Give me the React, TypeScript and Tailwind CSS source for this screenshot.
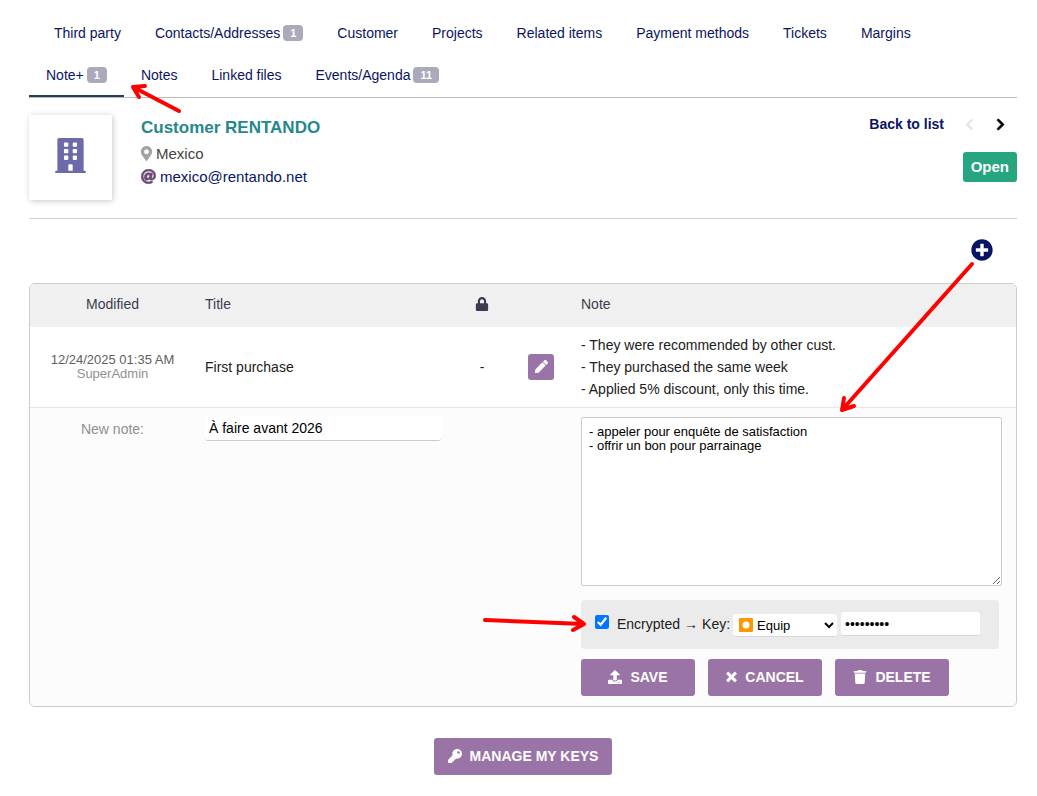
import { useState } from "react";
import type { ReactNode } from "react";
import {
  FaAt,
  FaBuilding,
  FaChevronLeft,
  FaChevronRight,
  FaKey,
  FaLock,
  FaMapMarkerAlt,
  FaPen,
  FaPlusCircle,
  FaTimes,
  FaTrash,
  FaUpload,
} from "react-icons/fa";

type Tab = { label: string; count?: number; active?: boolean };

const topTabs: Tab[] = [
  { label: "Third party" },
  { label: "Contacts/Addresses", count: 1 },
  { label: "Customer" },
  { label: "Projects" },
  { label: "Related items" },
  { label: "Payment methods" },
  { label: "Tickets" },
  { label: "Margins" },
];

const bottomTabs: Tab[] = [
  { label: "Note+", count: 1, active: true },
  { label: "Notes" },
  { label: "Linked files" },
  { label: "Events/Agenda", count: 11 },
];

function TabLink({ label, count, active }: Tab) {
  return (
    <a
      href="#"
      className={`flex h-[42px] items-center gap-[3px] border-b-2 px-[17px] whitespace-nowrap text-[#0a1464] ${
        active ? "border-[#263c5c]" : "border-transparent"
      }`}
    >
      {label}
      {count !== undefined && (
        <span className="h-4 rounded bg-[#aaaabb] px-[7px] text-[11px] leading-4 font-bold text-white">
          {count}
        </span>
      )}
    </a>
  );
}

function ActionButton({ icon, children }: { icon: ReactNode; children: ReactNode }) {
  return (
    <button
      type="button"
      className="flex h-[37px] w-[114px] items-center justify-center gap-2 rounded-[3px] bg-[#9b74a7] font-bold text-white uppercase"
    >
      {icon}
      {children}
    </button>
  );
}

function Arrows() {
  return (
    <svg
      className="pointer-events-none absolute top-0 left-0 h-[796px] w-[1037px]"
      viewBox="0 0 1037 796"
      fill="none"
      stroke="#ff0000"
      strokeWidth="4"
      strokeLinecap="round"
      strokeLinejoin="round"
      aria-hidden="true"
    >
      <path d="M179 111 L133 87 M145 86 L133 87 L139 97" />
      <path d="M972 264 L842 410 M844 398 L842 410 L854 406" />
      <path d="M485 620 L584 624 M574 617 L584 624 L573 630" />
    </svg>
  );
}

export default function App() {
  const [title, setTitle] = useState("À faire avant 2026");
  const [note, setNote] = useState(
    "- appeler pour enquête de satisfaction\n- offrir un bon pour parrainage"
  );
  const [encrypted, setEncrypted] = useState(true);
  const [secret, setSecret] = useState("rentando1");

  return (
    <div className="relative bg-white pt-[13px] pr-5 pb-5 pl-[29px] font-['Liberation_Sans',Arial,sans-serif] text-sm text-[#202020]">
      <nav className="border-b border-[#bbbbbb]">
        <div className="flex pl-2">
          {topTabs.map((tab) => (
            <TabLink key={tab.label} {...tab} />
          ))}
        </div>
        <div className="flex">
          {bottomTabs.map((tab) => (
            <TabLink key={tab.label} {...tab} />
          ))}
        </div>
      </nav>

      <header className="flex items-start border-b border-[#d0d0d0] pt-[17px] pb-[18px]">
        <div className="flex h-[85px] w-[83px] items-center justify-center bg-white pb-1 shadow-[1px_1px_6px_#c8c8c8]">
          <FaBuilding size={35} color="#6c6aa8" />
        </div>
        <div className="ml-[29px] text-[15px]">
          <h1 className="mt-0.5 text-[17px] leading-[22px] font-bold text-[#25888c]">
            Customer RENTANDO
          </h1>
          <div className="mt-[3px] flex h-[23px] items-center gap-1 text-[#444444]">
            <FaMapMarkerAlt size={15} color="#a3a3a3" className="-mx-[2px] w-[15px]" />
            Mexico
          </div>
          <div className="flex h-[23px] items-center gap-1">
            <FaAt size={15} color="#6c4a75" stroke="#6c4a75" strokeWidth={20} />
            <a href="mailto:mexico@rentando.net" className="text-[#0a1464]">
              mexico@rentando.net
            </a>
          </div>
        </div>
        <div className="ml-auto flex flex-col items-end">
          <div className="flex h-[18px] items-center pr-[10px]">
            <a href="#" className="font-bold text-[#0a1464]">
              Back to list
            </a>
            <button type="button" aria-label="Previous" disabled className="ml-[19px]">
              <FaChevronLeft size={13} color="#e3e3e3" />
            </button>
            <button type="button" aria-label="Next" className="ml-[18px]">
              <FaChevronRight size={13} color="#000000" stroke="#000000" strokeWidth={30} />
            </button>
          </div>
          <span className="mt-[19px] h-[30px] rounded-[3px] bg-[#25a580] px-2 text-[15px] leading-[30px] font-bold text-white">
            Open
          </span>
        </div>
      </header>

      <div className="flex justify-end pt-5 pr-6 pb-[22px]">
        <button type="button" aria-label="New note">
          <FaPlusCircle size={22} color="#0a1464" />
        </button>
      </div>

      <div className="overflow-hidden rounded-md border border-[#cccccc]">
        <table className="w-full table-fixed">
          <colgroup>
            <col className="w-[165px]" />
            <col className="w-64" />
            <col className="w-[62px]" />
            <col className="w-[58px]" />
            <col />
          </colgroup>
          <thead className="bg-[#f0f0f0] text-[#3c3c50]">
            <tr className="h-[43px]">
              <th className="pb-[3px] font-normal">Modified</th>
              <th className="px-[10px] pb-[3px] text-left font-normal">Title</th>
              <th className="pb-[3px]">
                <FaLock size={14} className="mx-auto" aria-label="Encrypted" />
              </th>
              <th />
              <th className="px-[10px] pb-[3px] text-left font-normal">Note</th>
            </tr>
          </thead>
          <tbody>
            <tr className="h-20">
              <td className="text-center text-[13px] leading-[14px] text-[#606060]">
                12/24/2025 01:35 AM
                <div className="text-[#909090]">SuperAdmin</div>
              </td>
              <td className="px-[10px]">First purchase</td>
              <td className="text-center">-</td>
              <td className="pl-[15px]">
                <button
                  type="button"
                  aria-label="Edit note"
                  className="flex size-[26px] items-center justify-center rounded-[3px] bg-[#9b74a7] text-white"
                >
                  <FaPen size={13} />
                </button>
              </td>
              <td className="px-[10px] leading-[22px]">
                - They were recommended by other cust.
                <br />- They purchased the same week
                <br />- Applied 5% discount, only this time.
              </td>
            </tr>
            <tr className="border-t border-[#e6e6e6] bg-[#fcfcfc] align-top">
              <td className="pt-[11px] text-center text-[#909090]">
                <label htmlFor="title">New note:</label>
              </td>
              <td className="px-[10px] pt-2">
                <input
                  id="title"
                  type="text"
                  value={title}
                  onChange={(e) => setTitle(e.target.value)}
                  className="block h-[25px] w-full rounded-[3px] border-b border-[#cccccc] bg-white px-1 text-black"
                />
              </td>
              <td />
              <td />
              <td className="px-[10px] pt-[9px] pb-[10px]">
                <textarea
                  aria-label="Note"
                  value={note}
                  onChange={(e) => setNote(e.target.value)}
                  className="block h-[169px] w-[calc(100%-4px)] rounded-[2px] border border-[#cccccc] bg-white px-[7px] py-[7px] text-[13px] leading-[14px] text-black"
                />
                <div className="mt-[14px] mr-[7px] flex h-[49px] items-center rounded bg-[#ebebeb] pl-[14px]">
                  <input
                    id="encrypted"
                    type="checkbox"
                    checked={encrypted}
                    onChange={(e) => setEncrypted(e.target.checked)}
                    className="mb-1 size-[14px]"
                  />
                  <label htmlFor="encrypted" className="ml-2 whitespace-nowrap">
                    Encrypted
                  </label>
                  <span className="mx-1">→</span>
                  <label htmlFor="key">Key:</label>
                  <div className="relative mt-[3px] ml-[3px]">
                    <select
                      id="key"
                      className="block h-[23px] w-[104px] rounded-[3px] border-b border-[#d8d8d8] bg-white pl-5 text-[13px] text-black"
                    >
                      <option>Equip</option>
                    </select>
                    <svg
                      className="pointer-events-none absolute top-1 left-1.5 size-[14px]"
                      viewBox="0 0 14 14"
                      aria-hidden="true"
                    >
                      <rect width="14" height="14" rx="1" fill="#ff9800" />
                      <circle cx="7" cy="7" r="3.5" fill="#ffffff" />
                    </svg>
                  </div>
                  <input
                    type="password"
                    aria-label="Key password"
                    value={secret}
                    onChange={(e) => setSecret(e.target.value)}
                    className="ml-1 h-6 w-[139px] rounded-[3px] border-b border-[#d8d8d8] bg-white px-1 text-black"
                  />
                </div>
                <div className="mt-[10px] flex gap-[13px]">
                  <ActionButton icon={<FaUpload size={14} />}>Save</ActionButton>
                  <ActionButton
                    icon={<FaTimes size={14} stroke="currentColor" strokeWidth={30} className="w-[11px]" />}
                  >
                    Cancel
                  </ActionButton>
                  <ActionButton icon={<FaTrash size={14} />}>Delete</ActionButton>
                </div>
              </td>
            </tr>
          </tbody>
        </table>
      </div>

      <div className="mt-[31px] flex justify-center">
        <button
          type="button"
          className="flex h-[37px] items-center gap-2 rounded-[3px] bg-[#9b74a7] px-[14px] font-bold text-white uppercase"
        >
          <FaKey size={14} />
          Manage my keys
        </button>
      </div>

      <Arrows />
    </div>
  );
}
